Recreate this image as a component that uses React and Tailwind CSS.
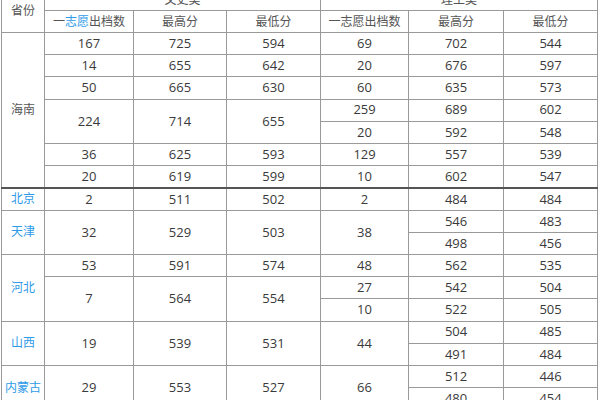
import React from "react";

const rows = [
  [{ t: "海南", rs: 7, prov: true }, "167", "725", "594", "69", "702", "544"],
  ["14", "655", "642", "20", "676", "597"],
  ["50", "665", "630", "60", "635", "573"],
  [{ t: "224", rs: 2 }, { t: "714", rs: 2 }, { t: "655", rs: 2 }, "259", "689", "602"],
  ["20", "592", "548"],
  ["36", "625", "593", "129", "557", "539"],
  ["20", "619", "599", "10", "602", "547"],
  [{ t: "北京", prov: true }, "2", "511", "502", "2", "484", "484"],
  [{ t: "天津", rs: 2, prov: true }, { t: "32", rs: 2 }, { t: "529", rs: 2 }, { t: "503", rs: 2 }, { t: "38", rs: 2 }, "546", "483"],
  ["498", "456"],
  [{ t: "河北", rs: 3, prov: true }, "53", "591", "574", "48", "562", "535"],
  [{ t: "7", rs: 2 }, { t: "564", rs: 2 }, { t: "554", rs: 2 }, "27", "542", "504"],
  ["10", "522", "505"],
  [{ t: "山西", rs: 2, prov: true }, { t: "19", rs: 2 }, { t: "539", rs: 2 }, { t: "531", rs: 2 }, { t: "44", rs: 2 }, "504", "485"],
  ["491", "484"],
  [{ t: "内蒙古", rs: 2, prov: true }, { t: "29", rs: 2 }, { t: "553", rs: 2 }, { t: "527", rs: 2 }, { t: "66", rs: 2 }, "512", "446"],
  ["480", "454"],
];

const cell = "border border-[#9a9a9a] p-0 text-center align-middle";

const App = () => {
  return (
    <div className="w-[600px] h-[400px] overflow-hidden bg-white">
      <table
        className="table-fixed border-collapse mt-[-12px] ml-[1px] w-[596px] text-[13px] text-[#3a3a3a]"
        style={{ fontFamily: '"Open Sans","Noto Sans CJK SC",sans-serif' }}
      >
        <colgroup>
          <col className="w-[43px]" />
          <col className="w-[89px]" />
          <col className="w-[93px]" />
          <col className="w-[94px]" />
          <col className="w-[88px]" />
          <col className="w-[95px]" />
          <col className="w-[94px]" />
        </colgroup>
        <thead className="text-[12px] text-[#555]">
          <tr className="h-[22px]">
            <td rowSpan={2} className={cell}>省份</td>
            <td colSpan={3} className={cell}>文史类</td>
            <td colSpan={3} className={cell}>理工类</td>
          </tr>
          <tr className="h-[22px]">
            <td className={cell}>
              一<span className="text-[#2f9be8]">志愿</span>出档数
            </td>
            <td className={cell}>最高分</td>
            <td className={cell}>最低分</td>
            <td className={cell}>一志愿出档数</td>
            <td className={cell}>最高分</td>
            <td className={cell}>最低分</td>
          </tr>
        </thead>
        <tbody>
          {rows.map((r, i) => (
            <tr key={i} className={i === 7 ? "h-[22.4px] border-t-2 border-t-[#555]" : "h-[22.2px]"}>
              {r.map((c, j) => {
                const o = typeof c === "string" ? { t: c } : c;
                return (
                  <td
                    key={j}
                    rowSpan={o.rs || 1}
                    className={
                      o.prov
                        ? `${cell} text-[12px] ${o.t === "海南" ? "text-[#555]" : "text-[#2f9be8]"}`
                        : cell
                    }
                  >
                    {o.t}
                  </td>
                );
              })}
            </tr>
          ))}
        </tbody>
      </table>
    </div>
  );
};

export default App;
